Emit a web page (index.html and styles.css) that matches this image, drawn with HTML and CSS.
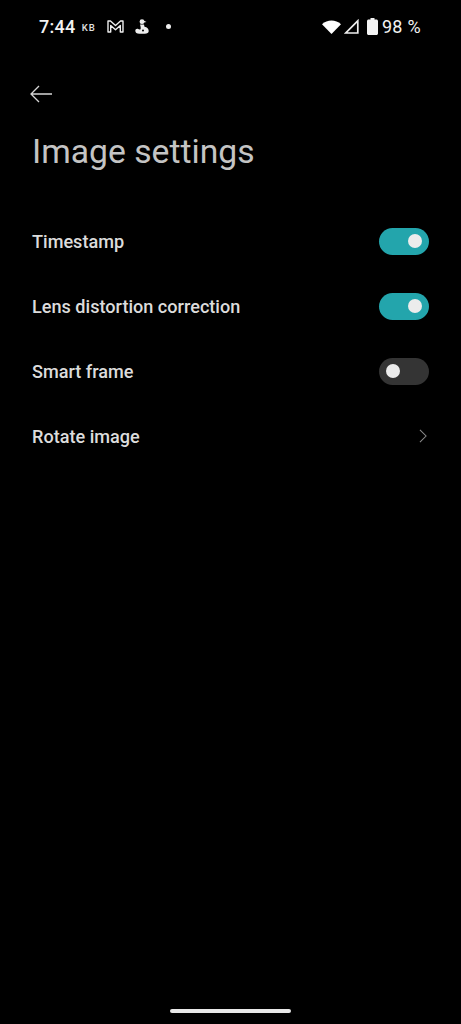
FILE: index.html
```html
<!DOCTYPE html>
<html lang="en">
<head>
<meta charset="utf-8">
<title>Image settings</title>
<link rel="stylesheet" href="styles.css">
</head>
<body>
<div class="screen">
  <div class="status">
    <div class="status-left">
      <span class="time">7:44</span>
      <span class="kb">KB</span>
      <svg class="ic-m" viewBox="0 0 17 13"><path d="M1 12V1H3.500L8.500 5.500L13.500 1H16V12H13.300V5.500L8.500 9.700L3.700 5.500V12Z" fill="none" stroke="#eee" stroke-width="1.400" stroke-linejoin="round"/></svg>
      <svg class="ic-s" viewBox="0 0 14 15"><circle cx="7" cy="2.700" r="2.400" fill="#eee"/><path d="M9 1.800L11.500 3L9 3.600Z" fill="#eee"/><path d="M5 5.500H9L9.500 7.800C12.300 8.300 13.700 10 13.700 12C13.700 13.800 12.200 14.800 9.700 14.800H4.300C1.800 14.800 .3 13.600 .3 11.800C.3 10.500 1.300 9.500 2.800 9.800C3.700 10 4.300 10.800 5.500 10.300C6 9 5.500 7 5 5.500Z" fill="#eee"/><circle cx="8" cy="11.500" r="1" fill="#000"/></svg>
      <span class="dot"></span>
    </div>
    <div class="status-right">
      <svg class="ic-wifi" viewBox="0 0 19 14"><path d="M0 4.200C5.300 -0.800 13.700 -0.800 19 4.200L9.500 14Z" fill="#fff"/></svg>
      <svg class="ic-sig" viewBox="0 0 15 15"><path d="M13.800 1.800V14H1.800Z" fill="none" stroke="#eee" stroke-width="1.700"/></svg>
      <svg class="ic-bat" viewBox="0 0 11 17"><path d="M3.500 0H7.500V1.500H9.500C10.200 1.500 11 2.200 11 3V15.500C11 16.300 10.200 17 9.500 17H1.500C.8 17 0 16.300 0 15.500V3C0 2.200 .8 1.500 1.500 1.500H3.500Z" fill="#f4f4f4"/></svg>
      <span class="pct">98 %</span>
    </div>
  </div>

  <header class="top">
    <svg class="back" viewBox="0 0 24 18"><path d="M23 9H2M10 1L2 9L10 17" fill="none" stroke="#d6d6d6" stroke-width="1.300"/></svg>
    <h1 class="title">Image settings</h1>
  </header>

  <ul class="list">
    <li class="row"><span class="label">Timestamp</span><span class="toggle on"><span class="knob"></span></span></li>
    <li class="row"><span class="label">Lens distortion correction</span><span class="toggle on"><span class="knob"></span></span></li>
    <li class="row"><span class="label">Smart frame</span><span class="toggle"><span class="knob"></span></span></li>
    <li class="row"><span class="label">Rotate image</span>
      <svg class="chev" viewBox="0 0 9 16"><path d="M1 1L8 8L1 15" fill="none" stroke="#8a8a8a" stroke-width="1.200"/></svg>
    </li>
  </ul>

  <div class="home"></div>
</div>
</body>
</html>
```

FILE: styles.css
```css
* { box-sizing: border-box; }
html, body { margin: 0; padding: 0; background: #000; }
.screen {
  width: 461px;
  height: 1024px;
  background: #000;
  display: flex;
  flex-direction: column;
  font-family: Roboto, "Liberation Sans", sans-serif;
  overflow: hidden;
}
.status {
  height: 53px;
  flex: none;
  display: flex;
  justify-content: space-between;
  align-items: center;
  padding: 0 40px 0 39px;
  color: #f2f2f2;
}
.status-left, .status-right { display: flex; align-items: center; }
.time { font-size: 18px; font-weight: 500; letter-spacing: .3px; }
.kb { font-size: 9.500px; font-weight: 500; letter-spacing: 1.200px; margin-left: 6px; margin-top: 1px; color: #e0e0e0; }
.ic-m { width: 17px; height: 13px; margin-left: 10.500px; }
.ic-s { width: 14px; height: 15px; margin-left: 11px; }
.dot { width: 5px; height: 5px; border-radius: 50%; background: #eee; margin-left: 17px; }
.ic-wifi { width: 19px; height: 14px; }
.ic-sig { width: 15px; height: 15px; margin-left: 3px; }
.ic-bat { width: 11px; height: 17px; margin-left: 8px; }
.pct { font-size: 18px; margin-left: 4px; letter-spacing: .3px; }
.top { padding: 0 32px; display: flex; flex-direction: column; align-items: flex-start; }
.back { width: 24px; height: 18px; margin-top: 32px; margin-left: -3px; display: block; }
.title { margin: 27px 0 0; font-size: 33.700px; line-height: 44px; font-weight: 400; color: #c4c4c4; }
.list { list-style: none; margin: 34.500px 0 0; padding: 0 32px; }
.row { height: 65px; display: flex; align-items: center; justify-content: space-between; }
.label { font-size: 18.100px; font-weight: 500; color: #dcdcdc; }
.toggle {
  width: 50px; height: 27px; border-radius: 14px; background: #343434;
  display: flex; align-items: center; padding: 0 7px;
}
.toggle.on { background: #23a5ac; justify-content: flex-end; }
.knob { width: 14px; height: 14px; border-radius: 50%; background: #ececec; }
.chev { width: 8px; height: 14px; margin-right: 2.500px; }
.home { width: 121px; height: 4px; border-radius: 2px; background: #e8e8e8; margin: auto auto 11px; }
```
